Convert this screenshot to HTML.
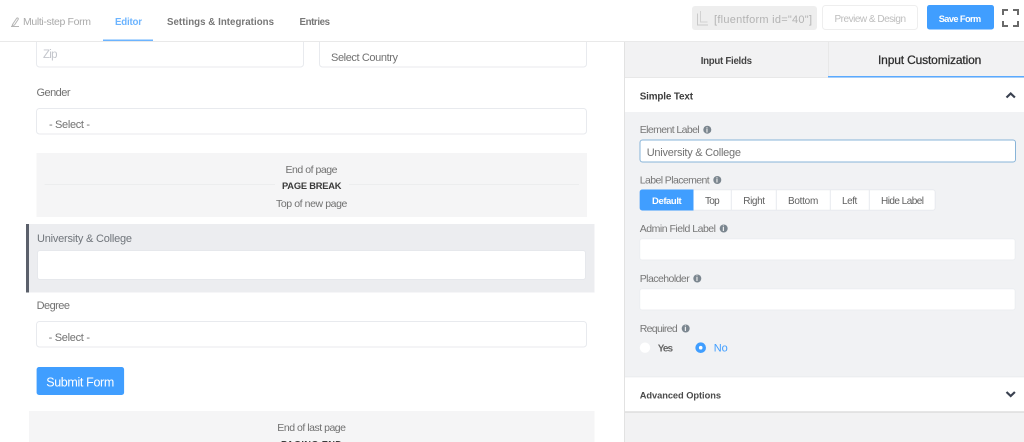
<!DOCTYPE html>
<html><head><meta charset="utf-8"><style>
html,body{margin:0;padding:0;background:#fff;width:1024px;height:442px;overflow:hidden}
svg{display:block;position:absolute;left:0;top:0}
text{font-family:"Liberation Sans",sans-serif;font-size:11.5px;fill:#707070;white-space:pre}
.b{font-weight:bold;font-size:9.7px;fill:#555}
.n{font-size:11px;fill:#727272}
.i{font-size:7px;font-weight:bold;fill:#fff}
</style></head><body>
<svg width="1024" height="442" viewBox="0 0 1024 442" xmlns="http://www.w3.org/2000/svg">
<!-- left form (top part drawn first, then covered by the bar) -->
<rect x="36.500" y="20" width="267" height="47" rx="3" fill="#fff" stroke="#e8eaee"/>
<text x="43" y="58" textLength="14.500" style="font-size:11.5px;fill:#c3c6cc">Zip</text>
<rect x="319.500" y="20" width="267" height="47" rx="3" fill="#fff" stroke="#e8eaee"/>
<text x="331" y="61" textLength="67" class="n">Select Country</text>
<rect x="0" y="0" width="1024" height="41" fill="#fff"/>

<!-- top bar -->
<rect x="0" y="41" width="1024" height="1" fill="#e9e9e9"/>
<path d="M12.500 24.500l4-6c.8-1.200 2.300-.2 1.600 1l-3.600 5.500-2.300.7zM11 26.500h8" fill="none" stroke="#b5b5b5" stroke-width="1"/>
<text x="23" y="25" textLength="68" style="font-size:10.5px;fill:#aaaaaa">Multi-step Form</text>
<text x="115" y="25" textLength="27" class="b" style="fill:#6cb4ff">Editor</text>
<rect x="103" y="39.500" width="50" height="1.500" fill="#6cb4ff"/>
<text x="167" y="25" textLength="107" class="b" style="fill:#777">Settings &amp; Integrations</text>
<text x="299.500" y="25" textLength="30.500" class="b" style="fill:#777">Entries</text>
<rect x="692" y="6" width="125" height="24" rx="3" fill="#eeeeee"/>
<path d="M697.500 13.500v11.500h10.500" fill="none" stroke="#c9c9c9" stroke-width="1"/>
<path d="M700.500 11v11h7" fill="none" stroke="#d2d2d2" stroke-width="1"/>
<text x="714" y="23" textLength="98" style="font-size:11px;fill:#b3b3b3">[fluentform id="40"]</text>
<rect x="822.500" y="5.500" width="95" height="24" rx="3" fill="#fff" stroke="#eeeeee"/>
<text x="834.500" y="22" textLength="71.500" style="font-size:10px;fill:#bdbdbd">Preview &amp; Design</text>
<rect x="927" y="5" width="67" height="24.500" rx="2.500" fill="#409eff"/>
<text x="938.700" y="22" textLength="42.500" style="font-size:9.2px;font-weight:bold;fill:#fff">Save Form</text>
<path d="M1003 15v-5h5M1013 10h5v5M1003 21v5h5M1013 26h5v-5" fill="none" stroke="#6a6a6a" stroke-width="2"/>

<!-- left form -->
<text x="36.500" y="96" textLength="34" class="n">Gender</text>
<rect x="36.500" y="108.500" width="550" height="25.500" rx="3" fill="#fff" stroke="#e8eaee"/>
<text x="49" y="128" textLength="41" class="n">- Select -</text>
<rect x="36.500" y="153" width="550.500" height="64" fill="#f5f5f6"/>
<rect x="44.600" y="184" width="230.400" height="1" fill="#ecedee"/>
<rect x="349" y="184" width="230" height="1" fill="#ecedee"/>
<text x="285.500" y="173" textLength="52" style="font-size:10.5px;fill:#707070">End of page</text>
<text x="282" y="189" textLength="59.500" style="font-size:9.3px;font-weight:bold;fill:#3a3a3a">PAGE BREAK</text>
<text x="276" y="207" textLength="71.400" style="font-size:10.5px;fill:#707070">Top of new page</text>
<rect x="26" y="224" width="568.500" height="68.500" fill="#ecedf0"/>
<rect x="26" y="224" width="3" height="68.500" fill="#5b606b"/>
<text x="37" y="242" textLength="95" class="n" style="fill:#70757b">University &amp; College</text>
<rect x="37.500" y="250.500" width="548" height="29" rx="2.500" fill="#fff" stroke="#e6e8ec"/>
<text x="36.600" y="309" textLength="33.400" class="n">Degree</text>
<rect x="36.500" y="321.500" width="550" height="25.500" rx="3" fill="#fff" stroke="#e8eaee"/>
<text x="48.600" y="341" textLength="41.400" class="n">- Select -</text>
<rect x="36.600" y="367" width="87.500" height="28" rx="2.500" fill="#409eff"/>
<text x="46.200" y="386.500" textLength="68.100" style="font-size:12.5px;fill:#fff">Submit Form</text>
<rect x="29" y="411" width="565.500" height="31" fill="#f5f5f6"/>
<text x="277.300" y="431" textLength="68.700" style="font-size:10.5px;fill:#707070">End of last page</text>
<text x="281" y="447.500" textLength="61" style="font-size:9.3px;font-weight:bold;fill:#3a3a3a">PAGING END</text>

<!-- right panel -->
<rect x="624" y="42" width="400" height="400" fill="#f2f2f3"/>
<rect x="624" y="42" width="1" height="400" fill="#e2e2e2"/>
<rect x="828" y="42" width="1" height="34" fill="#e8e8e8"/>
<rect x="828" y="76" width="196" height="1.500" fill="#5aaaff"/>
<rect x="625" y="77" width="203" height="1" fill="#e8e8e8"/>
<text x="700.700" y="64" textLength="51.300" style="font-size:9.7px;font-weight:bold;fill:#444">Input Fields</text>
<text x="878" y="64" textLength="103.300" style="font-size:12px;fill:#2c2c2c;stroke:#2c2c2c;stroke-width:.25px">Input Customization</text>
<rect x="625" y="78" width="399" height="34" fill="#fff"/>
<text x="639.700" y="99.500" textLength="53.300" style="font-size:9.9px;font-weight:bold;fill:#3e3e3e">Simple Text</text>
<path d="M1006.500 97.500l4.200-4 4.200 4" fill="none" stroke="#3a4150" stroke-width="2.200"/>
<rect x="625" y="112" width="399" height="265" fill="#f1f2f4"/>

<text x="639.700" y="133" textLength="60" style="font-size:10.5px;fill:#777">Element Label</text>
<circle cx="707.300" cy="129.700" r="4" fill="#7b868f"/><text x="706" y="132.300" class="i">i</text>
<rect x="640" y="140" width="375.500" height="22" rx="2.500" fill="#fff" stroke="#88b4d8"/>
<text x="646.700" y="156" textLength="94.300" class="n">University &amp; College</text>

<text x="639.700" y="183.500" textLength="70" style="font-size:10.5px;fill:#777">Label Placement</text>
<circle cx="717.300" cy="180" r="4" fill="#7b868f"/><text x="716" y="182.600" class="i">i</text>
<rect x="639.700" y="189.700" width="295.500" height="20.500" rx="2.500" fill="#fff" stroke="#e8eaee"/>
<path d="M639.700 192a2.500 2.500 0 0 1 2.500-2.500H693.500V210.500H642.200a2.500 2.500 0 0 1-2.500-2.500z" fill="#409eff"/>
<path d="M731.300 190v20M776.300 190v20M830.300 190v20M869.300 190v20" stroke="#e8eaee" stroke-width="1"/>
<text x="652" y="204" textLength="29.700" style="font-size:9.5px;font-weight:bold;fill:#fff">Default</text>
<text x="705" y="204" textLength="14.700" style="font-size:10px;fill:#5f5f5f">Top</text>
<text x="743.300" y="204" textLength="21.700" style="font-size:10px;fill:#5f5f5f">Right</text>
<text x="788" y="204" textLength="30.300" style="font-size:10px;fill:#5f5f5f">Bottom</text>
<text x="842" y="204" textLength="15.300" style="font-size:10px;fill:#5f5f5f">Left</text>
<text x="881" y="204" textLength="43" style="font-size:10px;fill:#5f5f5f">Hide Label</text>

<text x="639.700" y="232" textLength="76.300" style="font-size:10.5px;fill:#777">Admin Field Label</text>
<circle cx="723.700" cy="228.500" r="4" fill="#7b868f"/><text x="722.400" y="231.100" class="i">i</text>
<rect x="639.700" y="238.700" width="375.500" height="21.300" rx="2.500" fill="#fff" stroke="#eceef1"/>

<text x="639.700" y="282" textLength="50" style="font-size:10.5px;fill:#777">Placeholder</text>
<circle cx="697.300" cy="278.500" r="4" fill="#7b868f"/><text x="696" y="281.100" class="i">i</text>
<rect x="639.700" y="288.700" width="375.500" height="21.300" rx="2.500" fill="#fff" stroke="#eceef1"/>

<text x="639.700" y="332" textLength="38" style="font-size:10.5px;fill:#777">Required</text>
<circle cx="685.700" cy="328.500" r="4" fill="#7b868f"/><text x="684.400" y="331.100" class="i">i</text>
<circle cx="645" cy="347.700" r="5.200" fill="#fff"/>
<text x="657.700" y="351.500" textLength="15.300" style="font-size:10px;font-weight:bold;fill:#666">Yes</text>
<circle cx="700.700" cy="347.700" r="5.300" fill="#409eff"/><circle cx="700.700" cy="347.700" r="1.800" fill="#fff"/>
<text x="713.700" y="351.500" textLength="14" style="font-size:11px;fill:#409eff">No</text>

<rect x="625" y="376.500" width="399" height="1" fill="#e8e9eb"/>
<rect x="625" y="377.300" width="399" height="34" fill="#fff"/>
<rect x="625" y="411.300" width="399" height="1.500" fill="#dedede"/>
<text x="639.700" y="398.500" textLength="81.300" style="font-size:9.3px;font-weight:bold;fill:#4a4a4a">Advanced Options</text>
<path d="M1006.500 392l4.200 4 4.200-4" fill="none" stroke="#3a4150" stroke-width="2.200"/>
</svg>
</body></html>
